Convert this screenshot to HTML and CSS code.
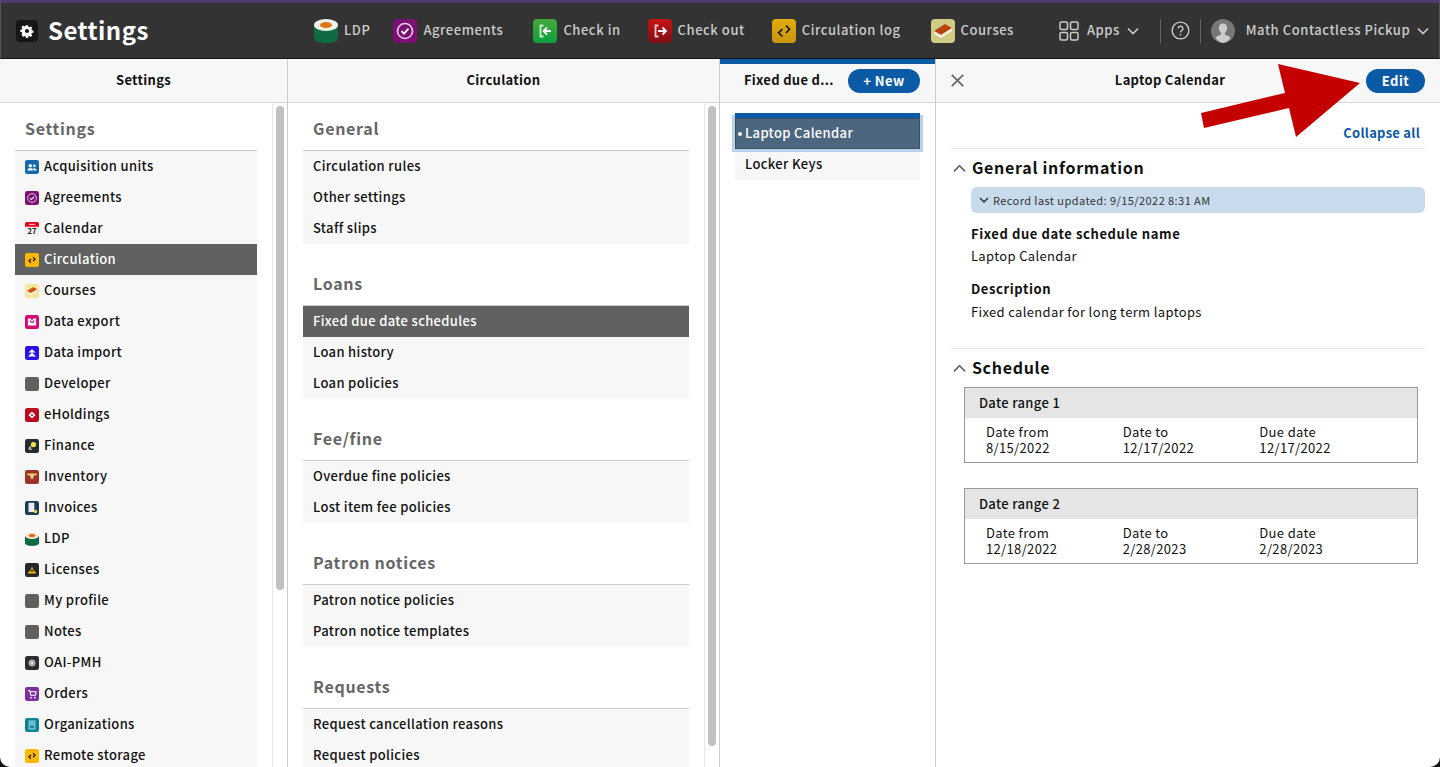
FILE: index.html
```html
<!DOCTYPE html>
<html lang="en">
<head>
    <meta charset="UTF-8">
    <title>Settings</title>
    <link rel="stylesheet" href="styles.css">
</head>
<body>
    <header class="topbar">
        <div class="brand">
            <span class="brand-icon">
                <svg viewBox="0 0 24 24" width="14" height="14"><path fill="#fff" fill-rule="evenodd" d="M10 1h4l.6 3 2 .9 2.6-1.700 2.800 2.800-1.700 2.600.9 2 3 .6v4l-3 .6-.9 2 1.700 2.600-2.800 2.800-2.600-1.700-2 .9-.6 3h-4l-.6-3-2-.9-2.600 1.700L1.400 18.800l1.700-2.600-.9-2-3-.6v-4l3-.6.9-2-1.700-2.600L4.200 1.600l2.600 1.700 2-.9zM12 8a4 4 0 1 0 0 8 4 4 0 0 0 0-8z" transform="translate(1.200 1.200) scale(.9)"/></svg>
            </span>
            <span class="brand-name">Settings</span>
        </div>
        <nav class="app-nav">
            <a class="app-link">
                <svg class="app-icon" viewBox="0 0 24 24"><use href="#i-ldp"/></svg><span>LDP</span>
            </a>
            <a class="app-link link-agreements">
                <svg class="app-icon" viewBox="0 0 24 24"><use href="#i-agreements"/></svg><span>Agreements</span>
            </a>
            <a class="app-link link-checkin">
                <svg class="app-icon" viewBox="0 0 24 24"><rect width="24" height="24" rx="4" fill="url(#g-green)"/><path d="M10.500 6.500H7.500v11h3" fill="none" stroke="#cdeccf" stroke-width="1.800"/><path d="M18 12h-7M14 8.500 10.500 12l3.500 3.500" fill="none" stroke="#fff" stroke-width="1.800"/></svg><span>Check in</span>
            </a>
            <a class="app-link link-checkout">
                <svg class="app-icon" viewBox="0 0 24 24"><rect width="24" height="24" rx="4" fill="url(#g-red)"/><path d="M10.500 6.500H7.500v11h3" fill="none" stroke="#f0c8c8" stroke-width="1.800"/><path d="M10 12h8M14.500 8.500 18 12l-3.500 3.500" fill="none" stroke="#fff" stroke-width="1.800"/></svg><span>Check out</span>
            </a>
            <a class="app-link link-circ">
                <svg class="app-icon" viewBox="0 0 24 24"><use href="#i-circ"/></svg><span>Circulation log</span>
            </a>
            <a class="app-link link-courses">
                <svg class="app-icon" viewBox="0 0 24 24"><use href="#i-courses"/></svg><span>Courses</span>
            </a>
        </nav>
        <a class="app-link apps-link">
            <svg class="apps-icon" viewBox="0 0 20 20" fill="none" stroke="#ccc" stroke-width="1.500"><rect x="1" y="1" width="7.500" height="7.500" rx="1.500"/><rect x="11.500" y="1" width="7.500" height="7.500" rx="1.500"/><rect x="1" y="11.500" width="7.500" height="7.500" rx="1.500"/><rect x="11.500" y="11.500" width="7.500" height="7.500" rx="1.500"/></svg>
            <span>Apps</span>
            <svg class="caret" viewBox="0 0 12 8"><path d="M1 1.500 6 6.500l5-5" fill="none" stroke="#ccc" stroke-width="1.600"/></svg>
        </a>
        <span class="divider divider-first"></span>
        <svg class="help-icon" viewBox="0 0 20 20"><circle cx="10" cy="10" r="8.800" fill="none" stroke="#ccc" stroke-width="1.400"/><path d="M7.500 8a2.500 2.500 0 1 1 3.700 2.200c-.8.500-1.200 1-1.200 2" fill="none" stroke="#ccc" stroke-width="1.400"/><circle cx="10" cy="14.600" r=".9" fill="#ccc"/></svg>
        <span class="divider"></span>
        <a class="app-link user-link">
            <svg class="avatar" viewBox="0 0 24 24"><circle cx="12" cy="12" r="12" fill="#777"/><path d="M12 4.500c-3 0-4.300 2.300-4 5 .2 2 1 3.500 2 4.300v1.700c-1.500 1-4.500 1.200-5.500 3.600A12 12 0 0 0 12 24a12 12 0 0 0 7.500-4.900c-1-2.400-4-2.600-5.500-3.600v-1.700c1-.8 1.800-2.300 2-4.300.3-2.700-1-5-4-5z" fill="#ccc"/></svg>
            <span>Math Contactless Pickup</span>
            <svg class="caret" viewBox="0 0 12 8"><path d="M1 1.500 6 6.500l5-5" fill="none" stroke="#ccc" stroke-width="1.600"/></svg>
        </a>
    </header>

    <svg class="defs" width="0" height="0">
        <defs>
            <linearGradient id="g-green" x1="0" y1="0" x2="0" y2="1"><stop offset="0" stop-color="#45a83a"/><stop offset="1" stop-color="#0d9f3f"/></linearGradient>
            <linearGradient id="g-red" x1="0" y1="0" x2="0" y2="1"><stop offset="0" stop-color="#c81414"/><stop offset="1" stop-color="#7d0f16"/></linearGradient>
            <linearGradient id="g-gold" x1="0" y1="0" x2="0" y2="1"><stop offset="0" stop-color="#e2ac0c"/><stop offset="1" stop-color="#c9960f"/></linearGradient>
        </defs>
        <symbol id="i-ldp" viewBox="0 0 24 24"><path d="M0 6h24v13c0 3-5 5-12 5S0 22 0 19z" fill="#0f6b41"/><ellipse cx="12" cy="6" rx="12" ry="6" fill="#f0f0e8"/><ellipse cx="12" cy="6" rx="6" ry="3" fill="#dd7411"/></symbol>
        <symbol id="i-agreements" viewBox="0 0 24 24"><rect width="24" height="24" rx="4" fill="#7b0f73"/><circle cx="12" cy="12" r="7.500" fill="none" stroke="#e9cfe6" stroke-width="1.600"/><path d="M8.500 12.200l2.500 2.500 4.500-5" fill="none" stroke="#fff" stroke-width="1.800"/></symbol>
        <symbol id="i-circ" viewBox="0 0 24 24"><rect width="24" height="24" rx="4" fill="url(#g-gold)"/><path d="M10.500 10 6.500 13.800l4 3.700M14 6.500l3.500 3.800-3.500 3.700" fill="none" stroke="#111" stroke-width="1.600"/></symbol>
        <symbol id="i-courses" viewBox="0 0 24 24"><rect width="24" height="24" rx="4" fill="#d0cc82"/><path d="M3 12 14 5l7 4-11 7z" fill="#b8430f"/><path d="M3 12l7 4 11-7v3l-11 7-7-4z" fill="#f3eee0"/></symbol>
        <symbol id="i-blank" viewBox="0 0 24 24"><rect width="24" height="24" rx="4" fill="#5f5f5f"/></symbol>
        <symbol id="i-acq" viewBox="0 0 24 24"><rect width="24" height="24" rx="4" fill="#1568ac"/><circle cx="9" cy="10" r="3" fill="#fff"/><circle cx="16" cy="10" r="2.500" fill="#cfe2f3"/><path d="M4 18c0-3 2-4 5-4s5 1 5 4zM15 18c0-2-.5-3-1.500-4 3 0 6.500.5 6.500 4z" fill="#fff"/></symbol>
        <symbol id="i-circ-mini" viewBox="0 0 24 24"><rect width="24" height="24" rx="4" fill="#fdb900"/><path d="M10.500 10 7 13.500l3 3.500M14 7l3 3.500-3 3.500" fill="none" stroke="#111" stroke-width="2.200"/></symbol>
        <symbol id="i-courses-mini" viewBox="0 0 24 24"><rect width="24" height="24" rx="4" fill="#f3e79b"/><path d="M3 12 14 5l7 4-11 7z" fill="#d9501a"/><path d="M3 12l7 4 11-7v3l-11 7-7-4z" fill="#f7f3e6"/></symbol>
        <symbol id="i-export" viewBox="0 0 24 24"><rect width="24" height="24" rx="4" fill="#d40a74"/><path d="M5 6h4l3 3 3-3h4v12H5zM8 8v3l4 3 4-3V8l-4 4z" fill="#fff" fill-rule="evenodd"/></symbol>
        <symbol id="i-import" viewBox="0 0 24 24"><rect width="24" height="24" rx="4" fill="#2a12e6"/><path d="M12 5l6 6H6zM12 11l7 7H5z" fill="#fff"/></symbol>
        <symbol id="i-ehold" viewBox="0 0 24 24"><rect width="24" height="24" rx="4" fill="#bb0a1e"/><path d="M12 6l6 6-6 6-6-6z" fill="#fff"/><rect x="10.500" y="10.500" width="3" height="3" fill="#bb0a1e"/></symbol>
        <symbol id="i-finance" viewBox="0 0 24 24"><rect width="24" height="24" rx="4" fill="#262a2e"/><circle cx="14.500" cy="9.500" r="4.500" fill="#f2e04a"/><path d="M6 18c0-3 1-6 4.500-6.500-.5 3 .5 6 2 7-2.500.5-6.500 1-6.500-.5z" fill="#aaa"/></symbol>
        <symbol id="i-inv" viewBox="0 0 24 24"><rect width="24" height="24" rx="4" fill="#9c3324"/><path d="M4 6h16v3H4z" fill="#f6d36b"/><path d="M8 9h8l-2 4h-4z" fill="#f6e2a8"/><rect x="10" y="13" width="4" height="2" fill="#f6e2a8"/></symbol>
        <symbol id="i-invoice" viewBox="0 0 24 24"><rect width="24" height="24" rx="4" fill="#1d3a55"/><path d="M6 3h10v16H6z" fill="#e9edf2"/><circle cx="18" cy="18" r="3" fill="#f2d43b"/></symbol>
        <symbol id="i-lic" viewBox="0 0 24 24"><rect width="24" height="24" rx="4" fill="#26282c"/><path d="M5 18c0-2.500 2-4 4-4.500L12 6l3 7.500c2 .5 4 2 4 4.500z" fill="#f5b400"/><path d="M9.500 15h5L12 10.500z" fill="#26282c"/></symbol>
        <symbol id="i-oai" viewBox="0 0 24 24"><rect width="24" height="24" rx="4" fill="#2a2d30"/><circle cx="12" cy="12" r="6" fill="#aaa"/><circle cx="12" cy="12" r="2" fill="#eee"/></symbol>
        <symbol id="i-orders" viewBox="0 0 24 24"><rect width="24" height="24" rx="4" fill="#7c2e9e"/><path d="M5 6h3l2 8h8l1-6H9" fill="none" stroke="#fff" stroke-width="1.800"/><circle cx="10.500" cy="18" r="1.500" fill="#fff"/><circle cx="17" cy="18" r="1.500" fill="#fff"/></symbol>
        <symbol id="i-org" viewBox="0 0 24 24"><rect width="24" height="24" rx="4" fill="#0c8296"/><rect x="6" y="4" width="12" height="16" fill="#6fc0cc"/><rect x="9" y="13" width="6" height="4" fill="#0c8296"/></symbol>
    </svg>

    <main class="panes">
        <section class="pane pane-settings">
            <div class="pane-head"><span class="pane-title">Settings</span></div>
            <div class="pane-body">
                <div class="nav-col">
                    <h3 class="group-title">Settings</h3>
                    <ul class="nav-list">
                        <li><svg class="mini" viewBox="0 0 24 24"><use href="#i-acq"/></svg>Acquisition units</li>
                        <li><svg class="mini" viewBox="0 0 24 24"><use href="#i-agreements"/></svg>Agreements</li>
                        <li><svg class="mini" viewBox="0 0 24 24"><rect width="24" height="24" rx="3" fill="#eee"/><path d="M0 3a3 3 0 0 1 3-3h18a3 3 0 0 1 3 3v5H0z" fill="#e8001f"/><path d="M7 4h10" stroke="#fff" stroke-width="1.500"/><text class="cal-day" x="12" y="21" text-anchor="middle">27</text></svg>Calendar</li>
                        <li class="active"><svg class="mini" viewBox="0 0 24 24"><use href="#i-circ-mini"/></svg>Circulation</li>
                        <li><svg class="mini" viewBox="0 0 24 24"><use href="#i-courses-mini"/></svg>Courses</li>
                        <li><svg class="mini" viewBox="0 0 24 24"><use href="#i-export"/></svg>Data export</li>
                        <li><svg class="mini" viewBox="0 0 24 24"><use href="#i-import"/></svg>Data import</li>
                        <li><svg class="mini" viewBox="0 0 24 24"><use href="#i-blank"/></svg>Developer</li>
                        <li><svg class="mini" viewBox="0 0 24 24"><use href="#i-ehold"/></svg>eHoldings</li>
                        <li><svg class="mini" viewBox="0 0 24 24"><use href="#i-finance"/></svg>Finance</li>
                        <li><svg class="mini" viewBox="0 0 24 24"><use href="#i-inv"/></svg>Inventory</li>
                        <li><svg class="mini" viewBox="0 0 24 24"><use href="#i-invoice"/></svg>Invoices</li>
                        <li><svg class="mini" viewBox="0 0 24 24"><use href="#i-ldp"/></svg>LDP</li>
                        <li><svg class="mini" viewBox="0 0 24 24"><use href="#i-lic"/></svg>Licenses</li>
                        <li><svg class="mini" viewBox="0 0 24 24"><use href="#i-blank"/></svg>My profile</li>
                        <li><svg class="mini" viewBox="0 0 24 24"><use href="#i-blank"/></svg>Notes</li>
                        <li><svg class="mini" viewBox="0 0 24 24"><use href="#i-oai"/></svg>OAI-PMH</li>
                        <li><svg class="mini" viewBox="0 0 24 24"><use href="#i-orders"/></svg>Orders</li>
                        <li><svg class="mini" viewBox="0 0 24 24"><use href="#i-org"/></svg>Organizations</li>
                        <li><svg class="mini" viewBox="0 0 24 24"><use href="#i-circ-mini"/></svg>Remote storage</li>
                    </ul>
                </div>
                <div class="scroll"><div class="thumb thumb-settings"></div></div>
            </div>
        </section>

        <section class="pane pane-circ">
            <div class="pane-head"><span class="pane-title">Circulation</span></div>
            <div class="pane-body">
                <div class="nav-col">
                    <h3 class="group-title">General</h3>
                    <ul class="nav-list">
                        <li>Circulation rules</li>
                        <li>Other settings</li>
                        <li>Staff slips</li>
                    </ul>
                    <h3 class="group-title">Loans</h3>
                    <ul class="nav-list">
                        <li class="active">Fixed due date schedules</li>
                        <li>Loan history</li>
                        <li>Loan policies</li>
                    </ul>
                    <h3 class="group-title">Fee/fine</h3>
                    <ul class="nav-list">
                        <li>Overdue fine policies</li>
                        <li>Lost item fee policies</li>
                    </ul>
                    <h3 class="group-title">Patron notices</h3>
                    <ul class="nav-list">
                        <li>Patron notice policies</li>
                        <li>Patron notice templates</li>
                    </ul>
                    <h3 class="group-title">Requests</h3>
                    <ul class="nav-list">
                        <li>Request cancellation reasons</li>
                        <li>Request policies</li>
                    </ul>
                </div>
                <div class="scroll"><div class="thumb thumb-circ"></div></div>
            </div>
        </section>

        <section class="pane pane-list">
            <div class="pane-head list-head">
                <span class="pane-title">Fixed due d...</span>
                <button class="btn btn-new">+ New</button>
            </div>
            <div class="list-body">
                <ul class="record-list">
                    <li class="selected"><span class="dot"></span>Laptop Calendar</li>
                    <li>Locker Keys</li>
                </ul>
            </div>
        </section>

        <section class="pane pane-detail">
            <div class="pane-head detail-head">
                <svg class="close-icon" viewBox="0 0 13 13"><path d="M.8.8l11.400 11.400M12.200.8.8 12.200" stroke="#666" stroke-width="1.700" fill="none"/></svg>
                <span class="pane-title">Laptop Calendar</span>
                <button class="btn btn-edit">Edit</button>
            </div>
            <div class="detail-body">
                <div class="collapse-row"><a class="collapse-all">Collapse all</a></div>
                <div class="section">
                    <h2 class="section-title"><svg class="chev" viewBox="0 0 14 9"><path d="M1 7.500 7 1.500l6 6" fill="none" stroke="#666" stroke-width="1.800"/></svg>General information</h2>
                    <div class="section-inner">
                        <div class="meta"><svg class="meta-chev" viewBox="0 0 10 7"><path d="M1 1l4 4 4-4" fill="none" stroke="#333" stroke-width="1.500"/></svg>Record last updated: 9/15/2022 8:31 AM</div>
                        <div class="kv kv-first">
                            <div class="kv-label">Fixed due date schedule name</div>
                            <div class="kv-value">Laptop Calendar</div>
                        </div>
                        <div class="kv">
                            <div class="kv-label">Description</div>
                            <div class="kv-value">Fixed calendar for long term laptops</div>
                        </div>
                    </div>
                </div>
                <div class="section section-schedule">
                    <h2 class="section-title"><svg class="chev" viewBox="0 0 14 9"><path d="M1 7.500 7 1.500l6 6" fill="none" stroke="#666" stroke-width="1.800"/></svg>Schedule</h2>
                    <div class="range">
                        <div class="range-head">Date range 1</div>
                        <div class="range-row">
                            <div><div>Date from</div><div>8/15/2022</div></div>
                            <div><div>Date to</div><div>12/17/2022</div></div>
                            <div><div>Due date</div><div>12/17/2022</div></div>
                        </div>
                    </div>
                    <div class="range">
                        <div class="range-head">Date range 2</div>
                        <div class="range-row">
                            <div><div>Date from</div><div>12/18/2022</div></div>
                            <div><div>Date to</div><div>2/28/2023</div></div>
                            <div><div>Due date</div><div>2/28/2023</div></div>
                        </div>
                    </div>
                </div>
            </div>
            <svg class="arrow" viewBox="0 0 165 80"><polygon points="160,23 78,4 85,33 1,53 4,68 89,48 96,77" fill="#c40000"/></svg>
        </section>
    </main>
</body>
</html>
```

FILE: styles.css
```css
* {
    box-sizing: border-box;
}

html {
    height: 100%;
    background: #111;
}

body {
    height: 100%;
    margin: 0;
    overflow: hidden;
    border-radius: 0 0 10px 10px;
    background: #fff;
    color: #111;
    font-family: "Noto Sans CJK SC", "Noto Sans", sans-serif;
    font-size: 13px;
    letter-spacing: 0.35px;
}

ul {
    list-style: none;
    margin: 0;
    padding: 0;
}

.defs {
    position: absolute;
}

/* top bar */
.topbar {
    height: 59px;
    display: flex;
    align-items: center;
    background: #333;
    border-top: 3px solid #4d3b6e;
    border-bottom: 1px solid #111;
    border-left: 1px solid #555;
    border-right: 1px solid #555;
    padding: 0 0 0 15px;
    color: #ccc;
}

.brand {
    display: flex;
    align-items: center;
    width: 298px;
    flex: none;
}

.brand-icon {
    width: 22px;
    height: 22px;
    border-radius: 4px;
    background: #161616;
    display: flex;
    align-items: center;
    justify-content: center;
    margin-right: 10px;
}

.brand-name {
    color: #fff;
    font-size: 24px;
    font-weight: 700;
    letter-spacing: 0.45px;
    padding-bottom: 2px;
}

.app-nav {
    display: flex;
    align-items: center;
    gap: 28px;
}

.app-link {
    display: flex;
    align-items: center;
    font-weight: 500;
    font-size: 13px;
    letter-spacing: 0.55px;
    color: #ccc;
    white-space: nowrap;
    flex: none;
}

.app-link span {
    padding-bottom: 2px;
}

.link-agreements {
    margin-left: -5px;
}

.link-checkin {
    margin-left: 2px;
}

.link-checkout {
    margin-left: -1px;
}

.link-circ {
    margin-left: -1px;
}

.link-courses {
    margin-left: 2px;
}

.app-icon {
    width: 24px;
    height: 24px;
    margin-right: 6px;
}

.apps-link {
    margin-left: 45px;
}

.apps-icon {
    width: 20px;
    height: 20px;
    margin-right: 8px;
}

.caret {
    width: 12px;
    height: 8px;
    margin-left: 7px;
}

.divider {
    width: 1px;
    height: 24px;
    background: #666;
    margin: 0 10px;
}

.divider-first {
    margin-left: 21px;
}

.help-icon {
    width: 19px;
    height: 19px;
}

.avatar {
    width: 24px;
    height: 24px;
    margin-right: 11px;
}

/* panes */
.panes {
    display: flex;
    height: calc(100vh - 59px);
}

.pane {
    display: flex;
    flex-direction: column;
    border-right: 1px solid #ccc;
    min-height: 0;
}

.pane-settings {
    width: 288px;
}

.pane-circ {
    width: 432px;
}

.pane-list {
    width: 216px;
}

.pane-detail {
    flex: 1;
    border-right: 0;
    position: relative;
}

.pane-head {
    height: 44px;
    flex: none;
    display: flex;
    align-items: center;
    justify-content: center;
    background: #f7f7f7;
    border-bottom: 1px solid #d8d8d8;
}

.pane-title {
    font-weight: 700;
    letter-spacing: 0.3px;
    padding-bottom: 2px;
}

.pane-body {
    flex: 1;
    display: flex;
    min-height: 0;
    overflow: hidden;
}

.nav-col {
    flex: 1;
    padding: 0 15px;
}

.group-title {
    margin: 0;
    padding: 12px 10px 0;
    height: 48px;
    border-bottom: 1px solid #ccc;
    font-size: 16px;
    line-height: 26px;
    font-weight: 700;
    letter-spacing: 0.7px;
    color: #666;
}

.nav-list {
    background: #f7f7f7;
    margin-bottom: 14px;
}

.nav-list li {
    height: 31px;
    display: flex;
    align-items: center;
    padding: 0 10px 2px;
    font-weight: 500;
    white-space: nowrap;
}

.nav-list li.active {
    background: #616161;
    color: #fff;
}

.mini {
    width: 14px;
    height: 14px;
    margin-right: 5px;
    flex: none;
    position: relative;
    top: 1px;
}

.cal-day {
    font-size: 13px;
    font-weight: 700;
    letter-spacing: 0;
    fill: #222;
}

.scroll {
    width: 15px;
    flex: none;
    border-left: 1px solid #e8e8e8;
    padding: 3px 2px 0 3px;
}

.thumb {
    background: #c1c1c1;
    border-radius: 5px;
    width: 8px;
}

.thumb-settings {
    height: 484px;
}

.thumb-circ {
    height: 640px;
}

/* record list */
.list-head {
    box-shadow: inset 0 5px 0 #0b5aa6;
    justify-content: space-between;
    padding: 0 15px 0 24px;
}

.btn {
    border: 0;
    height: 24px;
    border-radius: 12px;
    background: #0b5aa6;
    color: #fff;
    font-family: inherit;
    font-size: 13px;
    font-weight: 700;
    letter-spacing: 0.5px;
    padding: 0 0 2px;
    margin-top: 1px;
}

.btn-new {
    width: 72px;
}

.btn-edit {
    width: 59px;
}

.list-body {
    padding: 10px 15px;
    flex: 1;
}

.record-list::before {
    content: "";
    display: block;
    height: 5px;
    background: #0b5aa6;
    position: relative;
    z-index: 1;
}

.record-list li {
    height: 31px;
    display: flex;
    align-items: center;
    padding: 0 0 2px 10px;
    background: #f7f7f7;
    font-weight: 500;
}

.record-list li.selected {
    position: relative;
    background: #4d6680;
    color: #fff;
    border: 1px solid #3b4f63;
    padding-left: 9px;
    box-shadow: 0 0 0 3px #b9d1ea;
}

.dot {
    position: absolute;
    left: 2px;
    top: 13px;
    width: 4px;
    height: 4px;
    border-radius: 50%;
    background: #fff;
}

/* detail pane */
.detail-head {
    padding: 0 15px;
}

.close-icon {
    width: 13px;
    height: 13px;
    margin-right: 10px;
    flex: none;
}

.detail-head .pane-title {
    flex: 1;
    text-align: center;
}

.detail-body {
    flex: 1;
    padding: 0 15px;
}

.collapse-row {
    height: 46px;
    display: flex;
    align-items: flex-end;
    justify-content: flex-end;
    padding: 0 5px 5px 0;
    border-bottom: 1px solid #e6e6e6;
}

.collapse-all {
    font-weight: 700;
    line-height: 20px;
    letter-spacing: 0.25px;
    color: #0b5aa6;
}

.section {
    border-bottom: 1px solid #e6e6e6;
    padding-bottom: 25px;
}

.section-schedule {
    border-bottom: 0;
}

.section-title {
    margin: 0;
    height: 38px;
    padding-bottom: 2px;
    display: flex;
    align-items: center;
    font-size: 16px;
    font-weight: 700;
    letter-spacing: 0.7px;
}

.chev {
    width: 13px;
    height: 9px;
    margin: 2px 6px 0 2px;
}

.section-inner {
    padding-left: 20px;
}

.meta {
    height: 26px;
    display: flex;
    align-items: center;
    background: #c8dbed;
    border-radius: 6px;
    padding: 0 0 1px 8px;
    font-size: 11px;
    color: #333;
    letter-spacing: 0.43px;
}

.meta-chev {
    width: 10px;
    height: 7px;
    margin: 1px 4px 0 0;
}

.kv {
    margin-top: 11px;
    line-height: 22px;
}

.kv-first {
    margin-top: 10px;
}

.kv + .kv .kv-value {
    margin-top: 1px;
}

.kv-label {
    font-weight: 700;
    letter-spacing: 0.6px;
}

.kv-value {
    font-weight: 400;
}

.range {
    margin: 0 7px 25px 13px;
    border: 1px solid #999;
}

.range-head {
    height: 30px;
    display: flex;
    align-items: center;
    padding: 0 0 2px 14px;
    background: #e5e5e5;
    font-weight: 500;
}

.range-row {
    display: grid;
    grid-template-columns: repeat(3, 136.7px);
    padding: 6px 21px 6px;
    line-height: 16px;
}

.arrow {
    position: absolute;
    left: 264px;
    top: 1px;
    width: 165px;
    height: 80px;
}
```
